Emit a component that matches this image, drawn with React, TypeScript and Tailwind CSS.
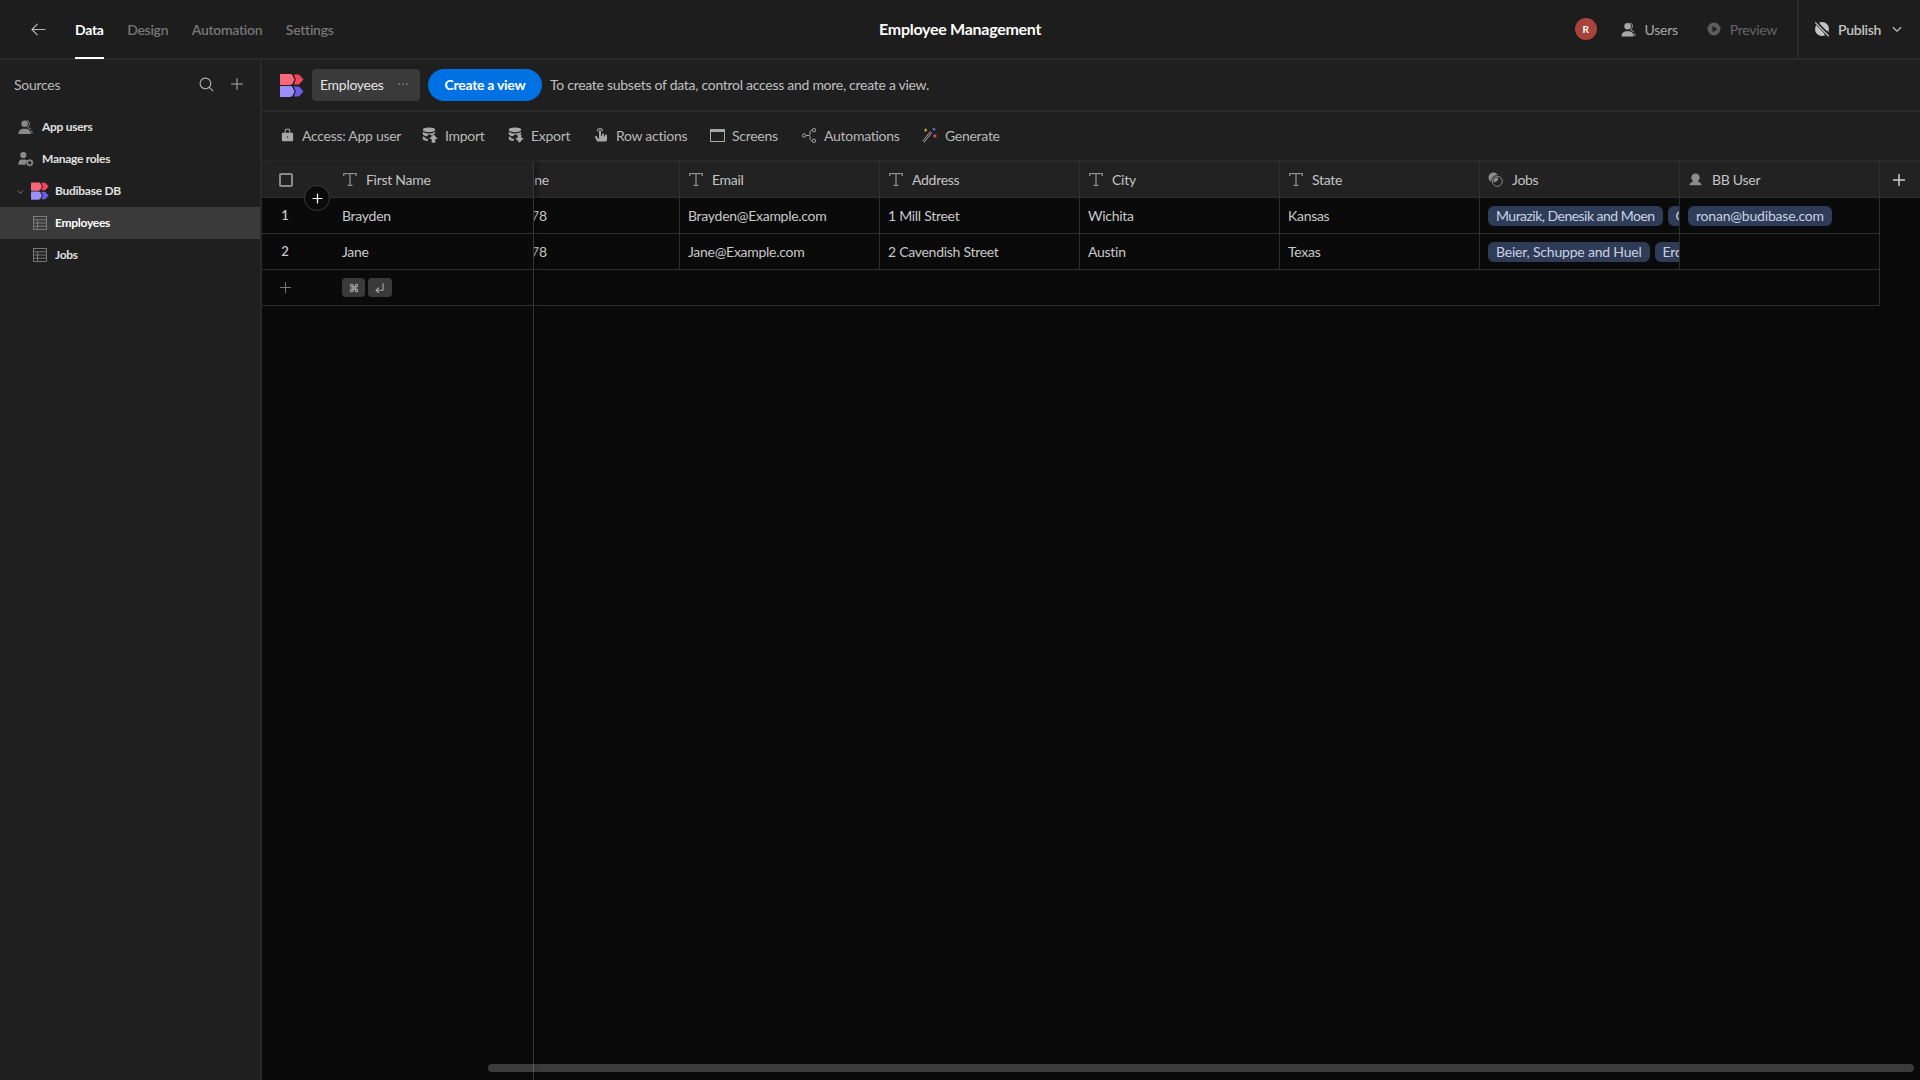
import React from 'react';
import {
  PiArrowLeft,
  PiMagnifyingGlass,
  PiPlus,
  PiPlusBold,
  PiLockFill,
  PiHandTapFill,
  PiPlayCircleFill,
  PiCaretDownBold,
  PiCaretDown,
  PiUserFill,
  PiCommandBold,
  PiArrowElbowDownLeftBold,
  PiDotsThreeBold,
} from 'react-icons/pi';

const Logo = ({ className }: { className?: string }) => (
  <svg viewBox="0 0 24 24" className={className}>
    <path d="M1 0.5h9c1.2 0 2 .5 2.6 1.4L14.5 6l-1.9 4.1c-.6.9-1.4 1.4-2.6 1.4H1c-.6 0-1-.4-1-1v-9c0-.6.4-1 1-1z" fill="#f9687a" />
    <path d="M13.8 1h4.4c.8 0 1.3.3 1.7 1l3.6 4-3.6 4c-.4.7-.9 1-1.7 1h-4.4l2-5z" fill="#f0455b" />
    <path d="M1 12.5h9c1.2 0 2 .5 2.6 1.4l1.9 4.1-1.9 4.1c-.6.9-1.4 1.4-2.6 1.4H1c-.6 0-1-.4-1-1v-9c0-.6.4-1 1-1z" fill="#9c90f8" />
    <path d="M13.8 13h4.4c.8 0 1.3.3 1.7 1l3.6 4-3.6 4c-.4.7-.9 1-1.7 1h-4.4l2-5z" fill="#6d5be9" />
  </svg>
);

const UsersIcon = ({ className }: { className?: string }) => (
  <svg viewBox="0 0 18 16" className={className} fill="currentColor">
    <circle cx="7" cy="4.5" r="3.5" />
    <path d="M0.5 15c0-3 1.5-4.4 4.2-5.2h4.6c2.7.8 4.2 2.2 4.2 5.2v.5H.5z" />
    <path d="M9.5 1a3.8 3.8 0 0 1 2.4 4.6c-.3 1.3-1 2.2-1.6 2.8l3.4 2M15 15c0-1.2-.3-2.4-1-3.2" fill="none" stroke="currentColor" strokeWidth="1" />
  </svg>
);

const RolesIcon = ({ className }: { className?: string }) => (
  <svg viewBox="0 0 18 18" className={className} fill="currentColor">
    <circle cx="6" cy="4.5" r="3.5" />
    <path d="M0.5 15c0-3 1-4.8 3.4-5.4h4.4c1 .3 1.6.7 2.1 1.3-1.2 1-1.8 2.4-1.6 4.6H.5z" />
    <circle cx="13.2" cy="13.2" r="2.7" fill="none" stroke="currentColor" strokeWidth="1.7" />
    <path d="M13.2 9v1.6M13.2 15.8v1.6M9 13.2h1.6M15.8 13.2h1.6M10.2 10.2l1.1 1.1M15.1 15.1l1.1 1.1M16.2 10.2l-1.1 1.1M11.3 15.1l-1.1 1.1" stroke="currentColor" strokeWidth="1.2" />
  </svg>
);

const TableIcon = ({ className }: { className?: string }) => (
  <svg viewBox="0 0 14 14" className={className} fill="none" stroke="currentColor" strokeWidth="0.8">
    <rect x="0.5" y="0.5" width="13" height="13" />
    <path d="M0.5 3.8h13M0.5 7h13M0.5 10.2h13M4.6 3.8v9.7" />
  </svg>
);

const DbIcon = ({ up, className }: { up?: boolean; className?: string }) => (
  <svg viewBox="0 0 16 16" className={className} fill="currentColor">
    <ellipse cx="7" cy="2.8" rx="6.2" ry="2.4" />
    <path d="M.8 4.4C2 6 4.6 6.4 7 6.4s5-.4 6.2-2v1.9L9.5 8.6 7.6 7.3 4 9.6 .8 7.6z" />
    <path d="M.8 9.2 3.8 11l-.8.8H6v2c-2.6 0-4.3-.5-5.2-1.5z" />
    {up ? (
      <path d="M11.5 7.2 15.8 12h-2.5v3.8H9.7V12H7.2z" />
    ) : (
      <path d="M9.7 7.2h3.6V11h2.5l-4.3 4.8L7.2 11h2.5z" />
    )}
  </svg>
);

const ScreenIcon = ({ className }: { className?: string }) => (
  <svg viewBox="0 0 15 13" className={className} fill="none" stroke="currentColor" strokeWidth="1">
    <rect x="0.5" y="0.5" width="14" height="12" />
    <rect x="0.5" y="0.5" width="14" height="2" fill="currentColor" />
  </svg>
);

const FlowIcon = ({ className }: { className?: string }) => (
  <svg viewBox="0 0 15 15" className={className} fill="none" stroke="currentColor" strokeWidth="1">
    <circle cx="2.2" cy="7.5" r="1.7" />
    <circle cx="12" cy="2.2" r="1.7" />
    <circle cx="12" cy="12.8" r="1.7" />
    <path d="M3.9 7.5h3.3M7.2 7.5c.9 0 .9-.6.9-1.2V4.2c0-.9.5-2 2.2-2M8.1 8.2v2.6c0 1 .6 2 2.2 2" />
  </svg>
);

const WandIcon = ({ className }: { className?: string }) => (
  <svg viewBox="0 0 16 16" className={className}>
    <path d="M1.3 14.7 9.2 5" stroke="#b9b9b9" strokeWidth="2.6" />
    <path d="M1.3 14.7 9.2 5" stroke="#1d1d1d" strokeWidth="1.1" />
    <path d="M3.7 1l.6 1.5 1.5.6-1.5.6-.6 1.5-.6-1.5-1.5-.6 1.5-.6z" fill="#e8b93f" />
    <path d="M12 0l.6 1.6 1.6.6-1.6.6-.6 1.6-.6-1.6-1.6-.6 1.6-.6z" fill="#6f7de8" />
    <path d="M13 6.5l.7 1.8 1.8.7-1.8.7-.7 1.8-.7-1.8-1.8-.7 1.8-.7z" fill="#e2556a" />
  </svg>
);

const TIcon = () => (
  <svg viewBox="0 0 14 13" className="w-[14px] h-[13px] shrink-0 text-[#8c8c8c]" fill="none" stroke="currentColor" strokeWidth="1.3">
    <path d="M.7 3V.7h12.6V3M7 .7v11.6M4.5 12.3h5" />
  </svg>
);

const LinkIcon = () => (
  <svg viewBox="0 0 15 15" className="w-[15px] h-[15px] shrink-0 text-[#8c8c8c]">
    <circle cx="5.5" cy="5.5" r="5" fill="currentColor" />
    <circle cx="9.3" cy="9.3" r="5" fill="none" stroke="#222222" strokeWidth="2.4" />
    <circle cx="9.3" cy="9.3" r="5" fill="none" stroke="currentColor" strokeWidth="1" />
  </svg>
);

const GlobeOffIcon = ({ className }: { className?: string }) => (
  <svg viewBox="0 0 16 16" className={className}>
    <circle cx="8" cy="8" r="7" fill="#c4c4c4" />
    <path d="M5 1.5c1 2-.5 3-2 3.5M11 14c-.5-2 .5-3.5 3-4" stroke="#1d1d1d" strokeWidth="1" fill="none" />
    <path d="M1.5 .8 15 15" stroke="#1d1d1d" strokeWidth="3.4" />
    <path d="M1.2 1.4 14.8 15.2" stroke="#c4c4c4" strokeWidth="1.3" />
  </svg>
);

const ToolItem = ({ icon, label, width }: { icon: React.ReactNode; label: string; width: string }) => (
  <div className={`flex items-center gap-[7px] ${width}`}>
    <span className="w-4 flex justify-center text-[#a8a8a8]">{icon}</span>
    <span className="text-[14px] text-[#b8b8b8] whitespace-nowrap">{label}</span>
  </div>
);

const Chip = ({ label, tight }: { label: string; tight?: boolean }) => (
  <span className={`h-5 shrink-0 flex items-center px-2 rounded-[6px] bg-[#2f3c57] text-[#c9d1e1] text-[14px] whitespace-nowrap ${tight ? 'tracking-[-0.52px]' : 'tracking-[-0.2px]'}`}>
    {label}
  </span>
);

const rows = [
  { n: 1, first: 'Brayden', phone: '12345678', email: 'Brayden@Example.com', address: '1 Mill Street', city: 'Wichita', state: 'Kansas', jobs: ['Murazik, Denesik and Moen', 'Gerlach'], user: 'ronan@budibase.com' },
  { n: 2, first: 'Jane', phone: '12345678', email: 'Jane@Example.com', address: '2 Cavendish Street', city: 'Austin', state: 'Texas', jobs: ['Beier, Schuppe and Huel', 'Erdman'], user: '' },
];

const columns = ['Email', 'Address', 'City', 'State'];

const HeadCell = ({ icon, label, pad = 'pl-[9px]' }: { icon: React.ReactNode; label: string; pad?: string }) => (
  <div className={`w-[200px] shrink-0 h-full flex items-center gap-[9px] border-r border-[#2e2e2e] ${pad}`}>
    {icon}
    <span className="text-[14px] text-[#c4c4c4] whitespace-nowrap">{label}</span>
  </div>
);

const Cell = ({ children }: { children?: React.ReactNode }) => (
  <div className="w-[200px] shrink-0 h-full flex items-center gap-[5px] pl-2 border-r border-[#2e2e2e] overflow-hidden text-[14px] text-[#c8c8c8] whitespace-nowrap">
    {children}
  </div>
);

export default function App() {
  return (
    <div className="w-full h-screen flex flex-col overflow-hidden bg-[#0a0a0a] tracking-[-0.28px] font-['Lato','Liberation_Sans',sans-serif]">
      {/* top bar */}
      <header className="h-[60px] shrink-0 flex items-center bg-[#1d1d1d] border-b-2 border-[#2a2a2a] relative">
        <PiArrowLeft className="ml-[29px] w-[19px] h-[19px] text-[#b4b4b4]" />
        <nav className="ml-[27px] flex h-full items-center gap-[23.5px] text-[14px] font-semibold">
          <span className="h-full flex items-center text-white font-bold border-b-2 border-white -mb-[2px]">Data</span>
          <span className="text-[#777777]">Design</span>
          <span className="text-[#777777]">Automation</span>
          <span className="text-[#777777]">Settings</span>
        </nav>
        <div className="flex-1 text-center text-[16px] font-bold text-white pl-[12px]">Employee Management</div>
        <div className="w-[22px] h-[22px] rounded-full bg-[#a8423a] flex items-center justify-center text-[10px] font-bold text-white">R</div>
        <UsersIcon className="ml-[24px] w-[17px] h-[15px] text-[#a8a8a8]" />
        <span className="ml-[7px] text-[14px] text-[#a8a8a8]">Users</span>
        <PiPlayCircleFill className="ml-[28px] w-4 h-4 text-[#5c5c5c]" />
        <span className="ml-[8px] text-[14px] text-[#666666]">Preview</span>
        <div className="ml-[20px] h-full w-[123px] flex items-center border-l-2 border-[#2a2a2a] pl-[15px]">
          <GlobeOffIcon className="w-4 h-4" />
          <span className="ml-[8px] text-[14px] font-semibold text-[#c4c4c4]">Publish</span>
          <PiCaretDownBold className="ml-[10px] w-3 h-3 text-[#c4c4c4]" />
        </div>
      </header>

      <div className="flex-1 flex min-h-0">
        {/* sidebar */}
        <aside className="w-[262px] shrink-0 bg-[#1f1f1f] border-r-2 border-[#2a2a2a] flex flex-col">
          <div className="h-[48px] mb-[2px] flex items-center pl-[14px] pr-[15px]">
            <span className="text-[14px] text-[#b8b8b8] flex-1">Sources</span>
            <PiMagnifyingGlass className="w-[17px] h-[17px] text-[#b0b0b0]" />
            <PiPlus className="ml-[14px] w-[16px] h-[16px] text-[#b0b0b0]" />
          </div>
          <div className="mt-[1px] flex flex-col text-[12px] font-bold text-[#e0e0e0]">
            <div className="h-8 flex items-center pl-[18px] gap-2">
              <UsersIcon className="w-[17px] h-4 text-[#8a8a8a]" />
              <span className="-ml-[1px]">App users</span>
            </div>
            <div className="h-8 flex items-center pl-[18px] gap-2">
              <RolesIcon className="w-4 h-4 text-[#8a8a8a]" />
              <span>Manage roles</span>
            </div>
            <div className="h-8 flex items-center pl-[16px]">
              <PiCaretDown className="w-[9px] h-[9px] text-[#8a8a8a]" />
              <Logo className="ml-[6px] w-[18px] h-[18px]" />
              <span className="ml-[6px]">Budibase DB</span>
            </div>
            <div className="h-8 flex items-center pl-[33px] gap-2 bg-[#3a3a3a] text-white">
              <TableIcon className="w-[14px] h-[14px] text-[#8a8a8a]" />
              <span>Employees</span>
            </div>
            <div className="h-8 flex items-center pl-[33px] gap-2">
              <TableIcon className="w-[14px] h-[14px] text-[#8a8a8a]" />
              <span>Jobs</span>
            </div>
          </div>
        </aside>

        {/* main area */}
        <main className="flex-1 min-w-0 flex flex-col relative">
          <div className="h-[52px] shrink-0 flex items-center pl-[18px] bg-[#1f1f1f] border-b-2 border-[#2a2a2a]">
            <Logo className="w-[24px] h-[25px]" />
            <div className="ml-2 w-[108px] h-8 rounded-[4px] bg-[#3a3a3a] flex items-center pl-2 pr-[10px] pb-[2px] justify-between">
              <span className="text-[14px] text-[#e4e4e4]">Employees</span>
              <PiDotsThreeBold className="w-[14px] h-[14px] text-[#8a8a8a]" />
            </div>
            <div className="ml-2 w-[114px] h-8 pb-[2px] rounded-full bg-[#0071e3] flex items-center justify-center text-[14px] font-bold text-white">
              Create a view
            </div>
            <span className="ml-2 -mt-[2px] text-[14px] text-[#c0c0c0]">To create subsets of data, control access and more, create a view.</span>
          </div>

          <div className="h-[50px] pb-[2px] shrink-0 flex items-center pl-[17px] bg-[#1f1f1f] border-b-2 border-[#2a2a2a]">
            <ToolItem width="w-[143px]" icon={<PiLockFill className="w-[15px] h-[15px]" />} label="Access: App user" />
            <ToolItem width="w-[86px]" icon={<DbIcon up className="w-4 h-4" />} label="Import" />
            <ToolItem width="w-[85px]" icon={<DbIcon className="w-4 h-4" />} label="Export" />
            <ToolItem width="w-[116px]" icon={<PiHandTapFill className="w-4 h-4" />} label="Row actions" />
            <ToolItem width="w-[92px]" icon={<ScreenIcon className="w-[15px] h-[13px]" />} label="Screens" />
            <ToolItem width="w-[121px]" icon={<FlowIcon className="w-[15px] h-[15px]" />} label="Automations" />
            <ToolItem width="w-[90px]" icon={<WandIcon className="w-4 h-4" />} label="Generate" />
          </div>

          {/* grid */}
          <div className="flex-1 flex min-h-0 relative">
            <div className="w-[272px] shrink-0 border-r border-[#363636] bg-[#0a0a0a] relative z-10 flex flex-col shadow-[3px_0_5px_rgba(0,0,0,0.35)]">
              <div className="h-[36px] flex items-center bg-[#222222] border-b border-[#2e2e2e]">
                <div className="w-[72px] shrink-0 pl-[17px]">
                  <div className="w-[14px] h-[14px] border-2 border-[#8a8a8a] rounded-[2px]" />
                </div>
                <div className="flex items-center gap-[9px] pl-[9px]">
                  <TIcon />
                  <span className="text-[14px] text-[#c4c4c4]">First Name</span>
                </div>
              </div>
              {rows.map((r) => (
                <div key={r.n} className="h-9 flex items-center border-b border-[#2e2e2e]">
                  <div className="w-[72px] shrink-0 pr-[26px] text-center text-[13px] font-semibold text-[#c8c8c8]">{r.n}</div>
                  <span className="pl-2 text-[14px] text-[#c8c8c8]">{r.first}</span>
                </div>
              ))}
              <div className="h-9 flex items-center border-b border-[#2e2e2e]">
                <div className="w-[72px] shrink-0 flex justify-center pr-[25px]">
                  <PiPlus className="w-[15px] h-[15px] text-[#7a7a7a]" />
                </div>
                <div className="pl-2 flex gap-[3px]">
                  <span className="w-[23px] h-[19px] rounded-[4px] bg-[#3a3a3a] flex items-center justify-center">
                    <PiCommandBold className="w-3 h-3 text-[#a8a8a8]" />
                  </span>
                  <span className="w-[24px] h-[19px] rounded-[4px] bg-[#3a3a3a] flex items-center justify-center">
                    <PiArrowElbowDownLeftBold className="w-3 h-3 text-[#a8a8a8]" />
                  </span>
                </div>
              </div>
              {/* add-row button sits over the header edge */}
              <div className="absolute left-[42px] top-[23px] w-[26px] h-[26px] rounded-full bg-[#0a0a0a] border border-[#3a3a3a] flex items-center justify-center z-20">
                <PiPlusBold className="w-[13px] h-[13px] text-white" />
              </div>
            </div>

            <div className="flex-1 min-w-0 overflow-hidden flex flex-col">
              <div className="h-[36px] shrink-0 flex items-center bg-[#222222] border-b border-[#2e2e2e] -ml-[54px]">
                <HeadCell pad="pl-[8px]" icon={<TIcon />} label="Phone" />
                {columns.map((c) => (
                  <HeadCell key={c} icon={<TIcon />} label={c} />
                ))}
                <HeadCell pad="pl-[8px]" icon={<LinkIcon />} label="Jobs" />
                <HeadCell pad="pl-[8px]" icon={<PiUserFill className="w-[15px] h-[15px] shrink-0 text-[#8c8c8c]" />} label="BB User" />
                <div className="w-[38px] shrink-0 flex justify-center">
                  <PiPlusBold className="w-4 h-4 text-[#d0d0d0]" />
                </div>
              </div>
              {rows.map((r) => (
                <div key={r.n} className="h-9 shrink-0 flex items-center -ml-[54px] w-[1400px]">
                  <div className="flex h-full border-b border-[#2e2e2e]">
                    <Cell><span className="-ml-[4px]">{r.phone}</span></Cell>
                    <Cell>{r.email}</Cell>
                    <Cell>{r.address}</Cell>
                    <Cell>{r.city}</Cell>
                    <Cell>{r.state}</Cell>
                    <Cell>
                      {r.jobs.map((j, i) => (
                        <Chip key={j} label={j} tight={r.n === 1 && i === 0} />
                      ))}
                    </Cell>
                    <Cell>{r.user && <Chip label={r.user} />}</Cell>
                  </div>
                </div>
              ))}
              <div className="h-9 shrink-0 w-[1346px] border-b border-r border-[#2e2e2e]" />
            </div>

            {/* horizontal scrollbar floats over the grid */}
            <div className="absolute left-[226px] right-[6px] bottom-2 h-2 rounded-full bg-white/20 z-20" />
          </div>
        </main>
      </div>
    </div>
  );
}
